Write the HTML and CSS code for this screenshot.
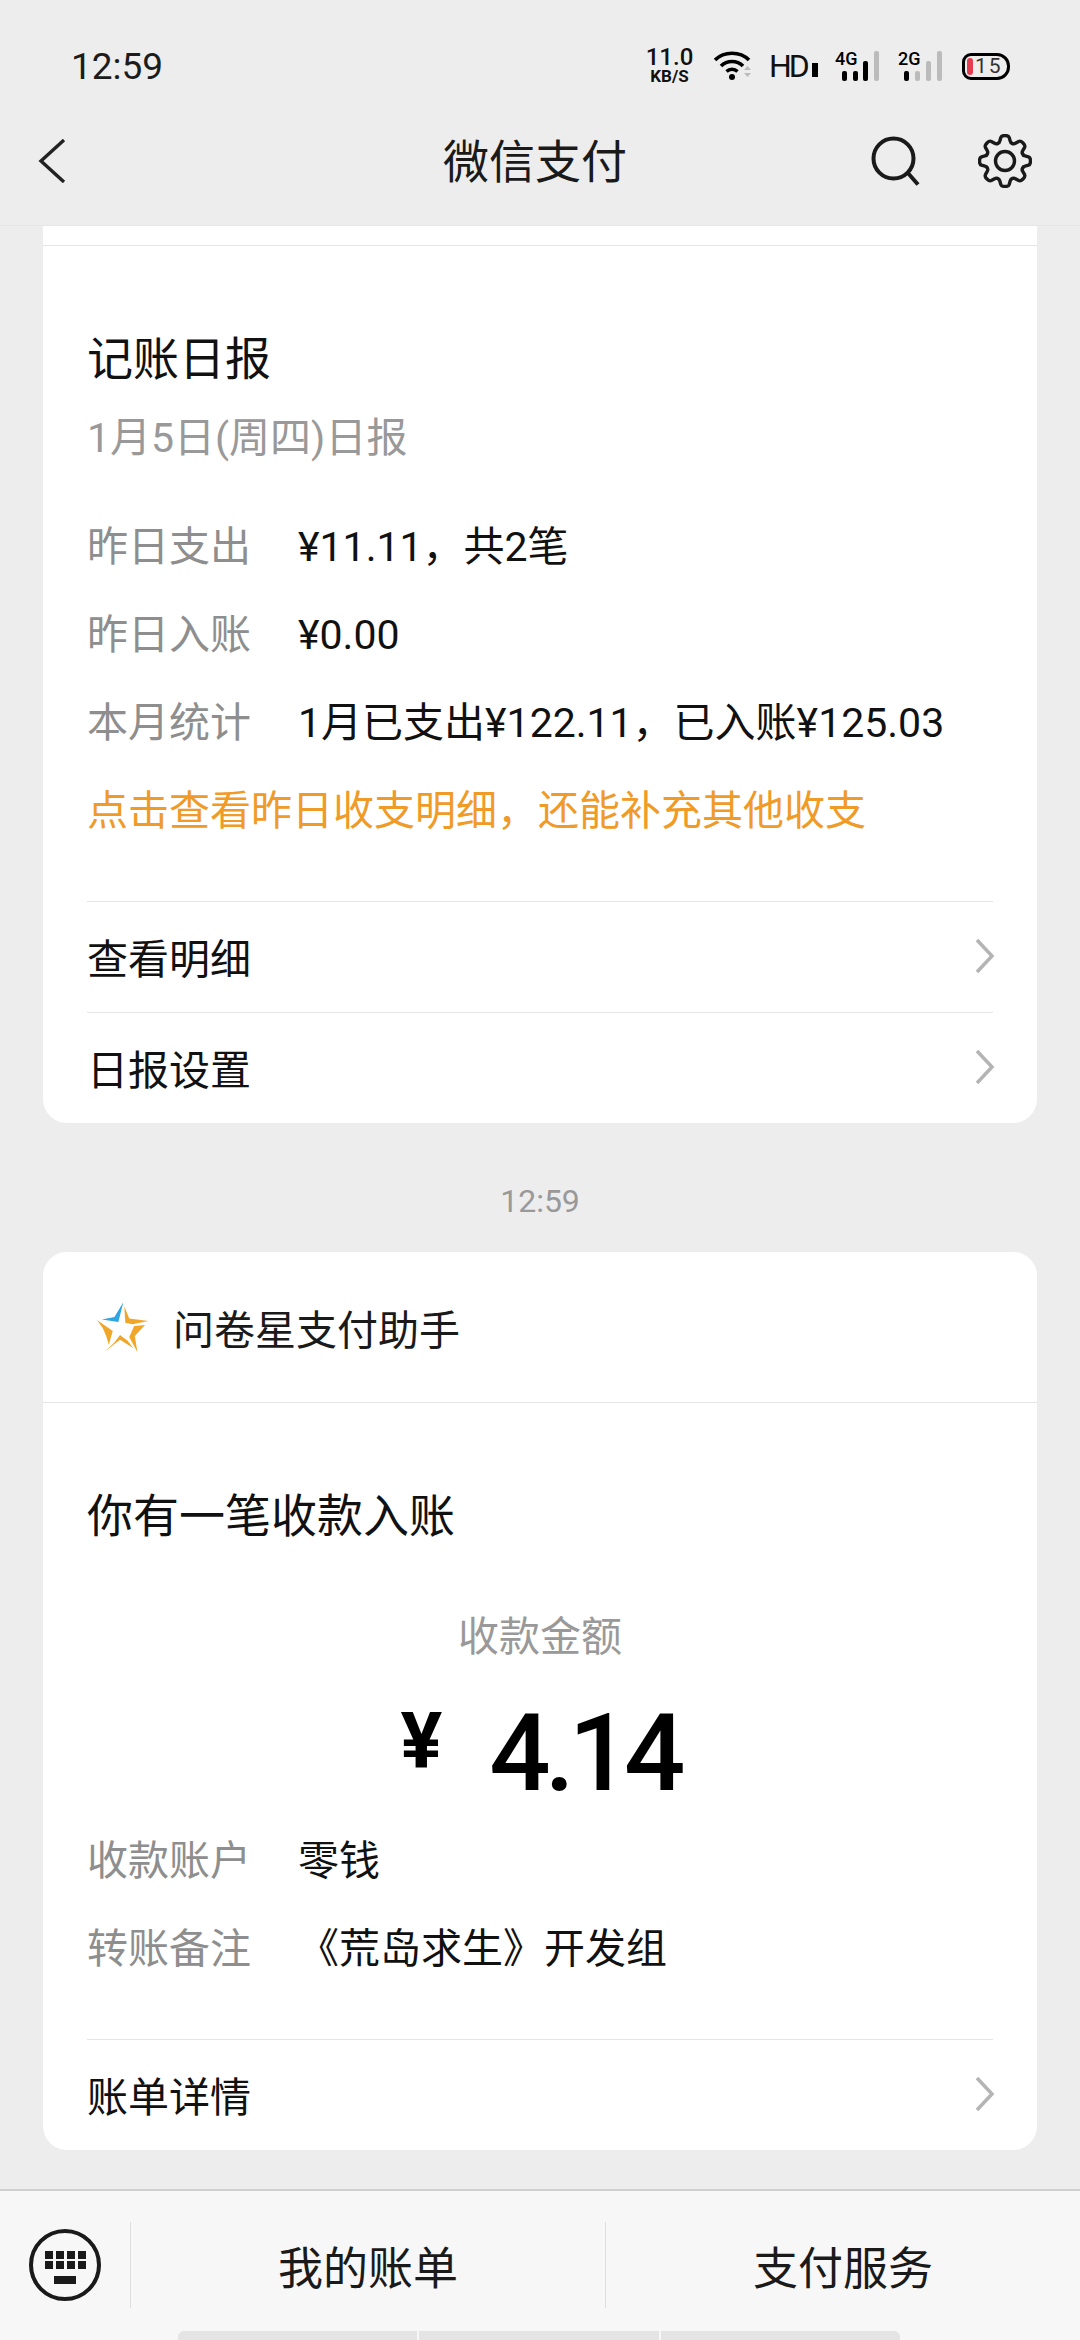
FILE: index.html
```html
<!DOCTYPE html>
<html lang="zh-CN">
<head>
    <meta charset="UTF-8">
    <meta name="viewport" content="width=device-width, initial-scale=1.0">
    <title>微信支付</title>
    <link rel="stylesheet" href="styles.css">
</head>
<body>
    <div class="statusbar">
        <span class="clock">12:59</span>
        <div class="status-icons">
            <div class="speed"><b>11.0</b><span>KB/S</span></div>
            <svg class="ic-wifi" width="38" height="30" viewBox="0 0 38 30">
                <path d="M1 9C10 0 26 0 35 9" fill="none" stroke="#000" stroke-width="3.600"/>
                <path d="M7 15C13 9 23 9 29 15" fill="none" stroke="#000" stroke-width="3.600"/>
                <path d="M12.500 20.500C15.500 17.500 20.500 17.500 23.500 20.500" fill="none" stroke="#000" stroke-width="3.400"/>
                <circle cx="18" cy="26" r="3" fill="#000"/>
                <path d="M30 19l3.500-4 3.500 4zM30 22l3.500 4 3.500-4z" fill="#bbb"/>
            </svg>
            <div class="hd">HD<i></i></div>
            <svg class="ic-signal" width="45" height="32" viewBox="0 0 45 32">
                <text x="0" y="15" class="sig-text">4G</text>
                <rect x="7" y="21" width="5" height="10" rx="2" fill="#000"/>
                <rect x="18" y="21" width="5" height="10" rx="2" fill="#000"/>
                <rect x="28" y="11" width="5" height="20" rx="2" fill="#000"/>
                <rect x="39" y="1" width="5" height="30" rx="2" fill="#bbb"/>
            </svg>
            <svg class="ic-signal" width="45" height="32" viewBox="0 0 45 32">
                <text x="0" y="15" class="sig-text">2G</text>
                <rect x="6" y="21" width="5" height="10" rx="2" fill="#000"/>
                <rect x="17" y="21" width="5" height="10" rx="2" fill="#bbb"/>
                <rect x="28" y="11" width="5" height="20" rx="2" fill="#bbb"/>
                <rect x="39" y="1" width="5" height="30" rx="2" fill="#bbb"/>
            </svg>
            <div class="battery"><i></i><span>15</span></div>
        </div>
    </div>

    <div class="navbar">
        <svg class="nav-back" width="30" height="44" viewBox="0 0 30 44">
            <path d="M28 1L5 22L28 43" fill="none" stroke="#222" stroke-width="3.400"/>
        </svg>
        <h1>微信支付</h1>
        <svg class="nav-search" width="50" height="50" viewBox="0 0 50 50">
            <circle cx="23.500" cy="22.500" r="20" fill="none" stroke="#1a1a1a" stroke-width="4"/>
            <path d="M37 36L48 48.500" fill="none" stroke="#1a1a1a" stroke-width="4"/>
        </svg>
        <svg class="nav-gear" width="54" height="54" viewBox="-27 -27 54 54" fill="none" stroke="#1a1a1a" stroke-width="3.400">
            <defs>
                <path id="tooth" stroke-linecap="round" d="M-7.270-17.550Q-5.500-18-5.200-20L-4.200-23.500Q-3.500-25.500 0-25.500Q3.500-25.500 4.200-23.500L5.200-20Q5.500-18 7.270-17.550"/>
            </defs>
            <circle cx="0" cy="0" r="9.500"/>
            <use href="#tooth"/>
            <use href="#tooth" transform="rotate(45)"/>
            <use href="#tooth" transform="rotate(90)"/>
            <use href="#tooth" transform="rotate(135)"/>
            <use href="#tooth" transform="rotate(180)"/>
            <use href="#tooth" transform="rotate(225)"/>
            <use href="#tooth" transform="rotate(270)"/>
            <use href="#tooth" transform="rotate(315)"/>
        </svg>
    </div>

    <div class="content">
        <div class="card card-top">
            <div class="top-stub"></div>
            <div class="card-body">
                <div class="msg-title">记账日报</div>
                <div class="msg-sub">1月5日(周四)日报</div>
                <div class="info-rows">
                    <div class="info-row"><span class="info-label">昨日支出</span><span>¥11.11，共2笔</span></div>
                    <div class="info-row"><span class="info-label">昨日入账</span><span>¥0.00</span></div>
                    <div class="info-row"><span class="info-label">本月统计</span><span>1月已支出¥122.11，已入账¥125.03</span></div>
                </div>
                <div class="highlight">点击查看昨日收支明细，还能补充其他收支</div>
            </div>
            <div class="link-row link-first">
                <span>查看明细</span>
                <svg class="chevron" width="20" height="36" viewBox="0 0 20 36"><path d="M2 2L17 18L2 34" fill="none" stroke="#b4b4b4" stroke-width="3.500"/></svg>
            </div>
            <div class="link-row">
                <span>日报设置</span>
                <svg class="chevron" width="20" height="36" viewBox="0 0 20 36"><path d="M2 2L17 18L2 34" fill="none" stroke="#b4b4b4" stroke-width="3.500"/></svg>
            </div>
        </div>

        <div class="timestamp">12:59</div>

        <div class="card">
            <div class="card-head">
                <svg class="star" width="56" height="54" viewBox="270 178 170 160">
                    <path d="M362 183L347 243L297 235L335 228Z" fill="#2ea6e4"/>
                    <path d="M365 195L380 232L438 240L390 250L368 245Z" fill="#f0a628"/>
                    <path d="M428 252L397 285L405 335L380 288L395 255Z" fill="#f0a628"/>
                    <path d="M392 322L352 297L306 332L335 305L352 282L375 300Z" fill="#f0a628"/>
                    <path d="M282 237L330 270L318 312L310 285L300 262Z" fill="#f0a628"/>
                </svg>
                <span>问卷星支付助手</span>
            </div>
            <div class="card-body">
                <div class="msg-title">你有一笔收款入账</div>
                <div class="amount-label">收款金额</div>
                <div class="amount"><span class="yen">¥</span><span>4.14</span></div>
                <div class="info-rows">
                    <div class="info-row"><span class="info-label">收款账户</span><span>零钱</span></div>
                    <div class="info-row"><span class="info-label">转账备注</span><span>《荒岛求生》开发组</span></div>
                </div>
            </div>
            <div class="link-row link-first">
                <span>账单详情</span>
                <svg class="chevron" width="20" height="36" viewBox="0 0 20 36"><path d="M2 2L17 18L2 34" fill="none" stroke="#b4b4b4" stroke-width="3.500"/></svg>
            </div>
        </div>
    </div>

    <div class="bottombar">
        <div class="menu">
            <div class="kb-cell">
                <svg width="72" height="72" viewBox="0 0 72 72">
                    <circle cx="36" cy="36" r="34" fill="none" stroke="#1a1a1a" stroke-width="4"/>
                    <g fill="#1a1a1a">
                        <rect x="16" y="22" width="8" height="8"/><rect x="27" y="22" width="8" height="8"/><rect x="38" y="22" width="8" height="8"/><rect x="49" y="22" width="8" height="8"/>
                        <rect x="16" y="32" width="8" height="8"/><rect x="27" y="32" width="8" height="8"/><rect x="38" y="32" width="8" height="8"/><rect x="49" y="32" width="8" height="8"/>
                        <rect x="25" y="47" width="22" height="8"/>
                    </g>
                </svg>
            </div>
            <div class="menu-item">我的账单</div>
            <div class="menu-item">支付服务</div>
        </div>
        <div class="handle"><i></i><i></i><i></i></div>
    </div>
</body>
</html>
```

FILE: styles.css
```css
* {
    box-sizing: border-box;
}

body {
    margin: 0;
    width: 1080px;
    height: 2340px;
    overflow: hidden;
    display: flex;
    flex-direction: column;
    background-color: #ededed;
    color: #111;
    font-family: Roboto, "Noto Sans CJK SC", sans-serif;
}

/* status bar */
.statusbar {
    height: 100px;
    padding: 32px 70px 0 71px;
    display: flex;
    align-items: center;
    justify-content: space-between;
}
.clock {
    font-size: 37px;
    color: #1c1c1c;
}
.status-icons {
    display: flex;
    align-items: center;
}
.speed {
    width: 47px;
    display: flex;
    flex-direction: column;
    align-items: center;
    color: #111;
}
.speed b {
    font-size: 24px;
    line-height: 20px;
    font-weight: 500;
}
.speed span {
    margin-top: 1px;
    font-size: 17px;
    line-height: 17px;
    font-weight: 700;
}
.ic-wifi {
    margin-left: 21px;
}
.hd {
    margin-left: 17px;
    width: 48px;
    font-size: 32px;
    line-height: 1;
    display: flex;
    align-items: flex-end;
    letter-spacing: -3px;
}
.hd i {
    width: 9px;
    height: 14px;
    margin: 0 0 5px 5px;
    border: 3px solid #000;
}
.ic-signal {
    margin-left: 18px;
}
.sig-text {
    font-family: Roboto, sans-serif;
    font-size: 18px;
    font-weight: 500;
    fill: #000;
}
.battery {
    margin-left: 2px;
    width: 48px;
    height: 27px;
    border: 3px solid #000;
    border-radius: 9px 13px 13px 9px;
    display: flex;
    align-items: center;
    padding-left: 2px;
    font-size: 21px;
    color: #333;
    letter-spacing: 2px;
}
.battery i {
    width: 6px;
    height: 17px;
    margin-right: 2px;
    border-radius: 3px;
    background-color: #e63c50;
}
.ic-signal + .battery {
    margin-left: 19px;
}

/* title bar */
.navbar {
    height: 126px;
    display: flex;
    align-items: center;
    padding: 0 48px 3px 36px;
    border-bottom: 1px solid #e6e6e6;
}
.navbar h1 {
    margin: 0 0 6px;
    flex: 1;
    padding-left: 377px;
    font-size: 46px;
    font-weight: 400;
    color: #1a1a1a;
}
.nav-search {
    margin-right: 58px;
}

/* message list */
.content {
    flex: 1;
    padding: 0 43px;
    overflow: hidden;
}
.card {
    background-color: #fff;
    border-radius: 24px;
}
.card-top {
    border-radius: 0 0 24px 24px;
}
.top-stub {
    height: 20px;
    border-bottom: 1px solid #e6e6e6;
}
.card-body {
    padding: 0 44px;
}
.msg-title {
    padding-top: 83px;
    font-size: 46px;
    line-height: 60px;
    color: #111;
}
.msg-sub {
    font-size: 41px;
    line-height: 56px;
    margin-top: 21px;
    color: #999;
}
.msg-sub + .info-rows {
    margin-top: 37px;
}
.info-row {
    display: flex;
    font-size: 41px;
    line-height: 88px;
    color: #111;
}
.info-label {
    width: 211px;
    color: #8e8e8e;
}
.highlight {
    font-size: 41px;
    line-height: 88px;
    color: #f09a28;
}
.link-row {
    margin: 0 44px;
    height: 111px;
    padding-bottom: 2px;
    border-top: 1px solid #e6e6e6;
    display: flex;
    align-items: center;
    justify-content: space-between;
    font-size: 41px;
    color: #111;
}
.link-first {
    margin-top: 46px;
}
.chevron {
    margin-right: -2px;
}

.timestamp {
    height: 129px;
    padding-top: 26px;
    display: flex;
    align-items: center;
    justify-content: center;
    font-size: 32px;
    color: #999;
}

.card-head {
    height: 151px;
    padding-left: 50px;
    display: flex;
    align-items: center;
    border-bottom: 1px solid #e6e6e6;
    font-size: 41px;
    color: #1a1a1a;
}
.card-head span {
    margin-left: 24px;
}
.amount-label {
    margin-top: 61px;
    font-size: 41px;
    line-height: 60px;
    text-align: center;
    color: #999;
}
.amount {
    margin-top: 22px;
    display: flex;
    justify-content: center;
    align-items: flex-start;
    font-size: 108px;
    line-height: 128px;
    font-weight: 500;
    letter-spacing: -6px;
    color: #000;
}
.yen {
    font-size: 78px;
    line-height: 106px;
    font-weight: 700;
    letter-spacing: 0;
    margin-right: 47px;
}

/* bottom menu */
.bottombar {
    height: 151px;
    border-top: 2px solid #cfcfcf;
    background-color: #f7f7f7;
    display: flex;
    flex-direction: column;
}
.menu {
    flex: 1;
    padding-top: 8px;
    display: flex;
    align-items: center;
}
.kb-cell {
    width: 131px;
    height: 86px;
    padding-left: 29px;
    display: flex;
    align-items: center;
    border-right: 1px solid #dedede;
}
.menu-item {
    flex: 1;
    height: 86px;
    display: flex;
    align-items: center;
    justify-content: center;
    font-size: 45px;
    color: #1a1a1a;
}
.menu-item + .menu-item {
    border-left: 1px solid #dedede;
}
.handle {
    height: 9px;
    margin: 0 180px 0 178px;
    display: flex;
    gap: 2px;
}
.handle i {
    flex: 1;
    background-color: #e4e4e4;
}
.handle i:first-child {
    border-radius: 6px 0 0 0;
}
.handle i:last-child {
    border-radius: 0 6px 0 0;
}
```
